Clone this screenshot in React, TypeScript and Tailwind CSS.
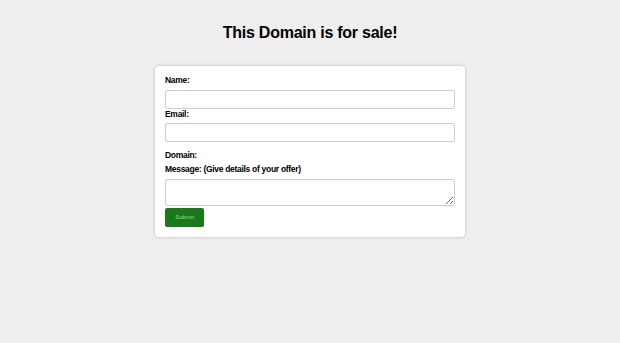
export default function App() {
  return (
    <div
      className="min-h-[343px] bg-[#eeeeee] flex flex-col items-center"
      style={{ fontFamily: '"Liberation Sans", Arial, sans-serif' }}
    >
      <h1 className="mt-[23px] text-[16px] leading-[20px] font-bold tracking-[-0.25px] text-black">
        This Domain is for sale!
      </h1>
      <form className="mt-[23px] w-[310px] bg-white rounded-[4px] shadow-[0_0_3px_rgba(0,0,0,0.25)] px-[10px] pt-[9px] pb-[10px] flex flex-col">
        <label className="text-[8.5px] leading-[10px] font-bold tracking-[-0.3px] text-black">Name:</label>
        <input className="mt-[5px] h-[19px] w-[290px] border border-[#cccccc] rounded-[2px] bg-white" />
        <label className="text-[8.5px] leading-[10px] font-bold tracking-[-0.3px] text-black">Email:</label>
        <input className="mt-[4px] h-[19px] w-[290px] border border-[#cccccc] rounded-[2px] bg-white" />
        <label className="mt-[8px] text-[8.5px] leading-[10px] font-bold tracking-[-0.3px] text-black">Domain:</label>
        <label className="mt-[4px] text-[8.5px] leading-[10px] font-bold tracking-[-0.3px] text-black">
          Message: (Give details of your offer)
        </label>
        <textarea className="mt-[5px] h-[27px] w-[290px] border border-[#cccccc] rounded-[2px] bg-white block" />
        <button
          type="button"
          className="mt-[2px] w-[39px] h-[19px] bg-[#1a7a1a] rounded-[2px] text-[6px] text-[#9fce9f]"
        >
          Submit
        </button>
      </form>
    </div>
  );
}
